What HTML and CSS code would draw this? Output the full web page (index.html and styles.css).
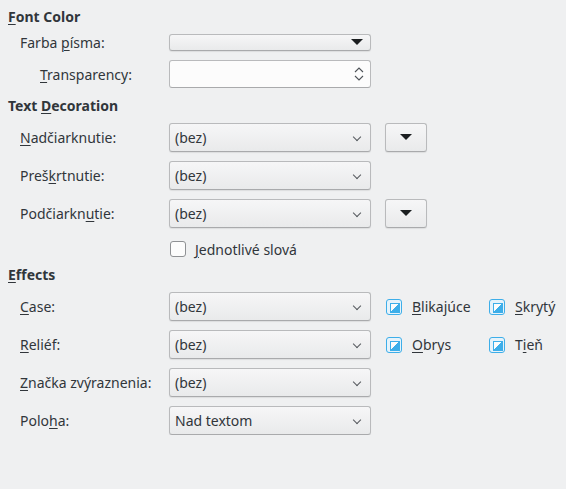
FILE: index.html
```html
<!DOCTYPE html>
<html lang="sk">
<head>
<meta charset="UTF-8" />
<title>Font Effects</title>
<link rel="stylesheet" href="styles.css">
</head>
<body>

<div class="panel">
  <div class="group-title"><u>F</u>ont Color</div>
  <div class="row">
    <label class="label">Farba <u>p</u>ísma:</label>
    <div class="control color-btn"><span class="tri"></span></div>
  </div>
  <div class="row row-spin">
    <label class="label indent"><u>T</u>ransparency:</label>
    <div class="control spin">
      <svg class="spin-arrows" width="10" height="16" viewBox="0 0 10 16">
        <path d="M1 6 L5 2 L9 6" fill="none" stroke="#4d5257" stroke-width="1.1"/>
        <path d="M1 10 L5 14 L9 10" fill="none" stroke="#4d5257" stroke-width="1.1"/>
      </svg>
    </div>
  </div>

  <div class="group-title">Text <u>D</u>ecoration</div>
  <div class="row">
    <label class="label"><u>N</u>adčiarknutie:</label>
    <div class="control combo">(bez)<span class="chev"></span></div>
    <div class="small-btn"><span class="tri"></span></div>
  </div>
  <div class="row">
    <label class="label">Preš<u>k</u>rtnutie:</label>
    <div class="control combo">(bez)<span class="chev"></span></div>
  </div>
  <div class="row">
    <label class="label">Podčiarkn<u>u</u>tie:</label>
    <div class="control combo">(bez)<span class="chev"></span></div>
    <div class="small-btn"><span class="tri"></span></div>
  </div>
  <div class="row row-check">
    <span class="label"></span>
    <span class="check-box"></span>
    <span class="check-text"><u>J</u>ednotlivé slová</span>
  </div>

  <div class="group-title"><u>E</u>ffects</div>
  <div class="row">
    <label class="label"><u>C</u>ase:</label>
    <div class="control combo">(bez)<span class="chev"></span></div>
    <div class="opts">
      <span class="opt"><span class="check-box partial"></span><u>B</u>likajúce</span>
      <span class="opt"><span class="check-box partial"></span><u>S</u>krytý</span>
    </div>
  </div>
  <div class="row">
    <label class="label"><u>R</u>eliéf:</label>
    <div class="control combo">(bez)<span class="chev"></span></div>
    <div class="opts">
      <span class="opt"><span class="check-box partial"></span><u>O</u>brys</span>
      <span class="opt"><span class="check-box partial"></span>T<u>i</u>eň</span>
    </div>
  </div>
  <div class="row">
    <label class="label"><u>Z</u>načka zvýraznenia:</label>
    <div class="control combo">(bez)<span class="chev"></span></div>
  </div>
  <div class="row">
    <label class="label">Polo<u>h</u>a:</label>
    <div class="control combo">Nad textom<span class="chev"></span></div>
  </div>
</div>

</body>
</html>
```

FILE: styles.css
```css
* {
  box-sizing: border-box;
}
body {
  margin: 0;
  background: #eff0f1;
  font-family: 'Noto Sans', sans-serif;
  font-size: 14px;
  color: #31363b;
}
u {
  text-decoration-thickness: 1px;
  text-underline-offset: 2px;
}
.panel {
  display: flex;
  flex-direction: column;
  padding: 8px 0 0 8px;
}
.group-title {
  height: 18px;
  line-height: 18px;
  font-weight: 700;
  margin-top: 9px;
}
.group-title:first-child {
  margin-top: 0;
}
.row {
  display: flex;
  align-items: center;
  height: 29px;
  margin-top: 9px;
  padding-left: 12px;
}
.group-title + .row {
  margin-top: 8px;
}
.group-title + .row:nth-child(2) {
  height: 17px;
}
.row-spin {
  height: 28px;
}
.row-check {
  height: 16px;
  margin-top: 13px;
}
.label {
  width: 149px;
  flex: none;
}
.label.indent {
  padding-left: 20px;
}
.control {
  width: 202px;
  height: 100%;
  flex: none;
  border: 1px solid #b9babc;
  border-bottom-color: #a9aaac;
  border-radius: 3px;
  position: relative;
}
.color-btn,
.combo,
.small-btn {
  background: linear-gradient(#f6f6f7, #e9eaeb);
  box-shadow: 0 1px 1px rgb(0 0 0 / 0.08);
}
.combo {
  padding-left: 5px;
  display: flex;
  align-items: center;
}
.chev {
  position: absolute;
  right: 10px;
  top: 10px;
  width: 6px;
  height: 6px;
  border-right: 1.2px solid #55595e;
  border-bottom: 1.2px solid #55595e;
  transform: rotate(45deg);
}
.tri {
  position: absolute;
  width: 0;
  height: 0;
  border-left: 6px solid transparent;
  border-right: 6px solid transparent;
  border-top: 6px solid #1b1e20;
}
.color-btn .tri {
  right: 7px;
  top: 4px;
}
.spin {
  background: #fcfcfc;
}
.spin-arrows {
  position: absolute;
  right: 6px;
  top: 5px;
}
.small-btn {
  width: 42px;
  height: 29px;
  margin-left: 14px;
  border: 1px solid #b9babc;
  border-bottom-color: #a9aaac;
  border-radius: 3px;
  position: relative;
}
.small-btn .tri {
  left: 14px;
  top: 10px;
}
.check-box {
  width: 16px;
  height: 16px;
  flex: none;
  border: 1px solid #8f9194;
  border-radius: 3px;
  background: #fcfcfc;
  position: relative;
}
.row-check .check-box {
  margin-left: 1px;
}
.check-text {
  margin-left: 9px;
}
.opts {
  display: flex;
  margin-left: 15px;
}
.opt {
  display: flex;
  align-items: center;
  width: 103px;
}
.opt .check-box {
  margin-right: 10px;
}
.check-box.partial {
  border-color: #3daee9;
  background: #e6f3fb;
}
.check-box.partial::after {
  content: "";
  position: absolute;
  left: 3px;
  top: 3px;
  width: 8px;
  height: 8px;
  background: linear-gradient(135deg, #fcfcfc 50%, #3daee9 50%);
  border: 1px solid #3daee9;
}
```
